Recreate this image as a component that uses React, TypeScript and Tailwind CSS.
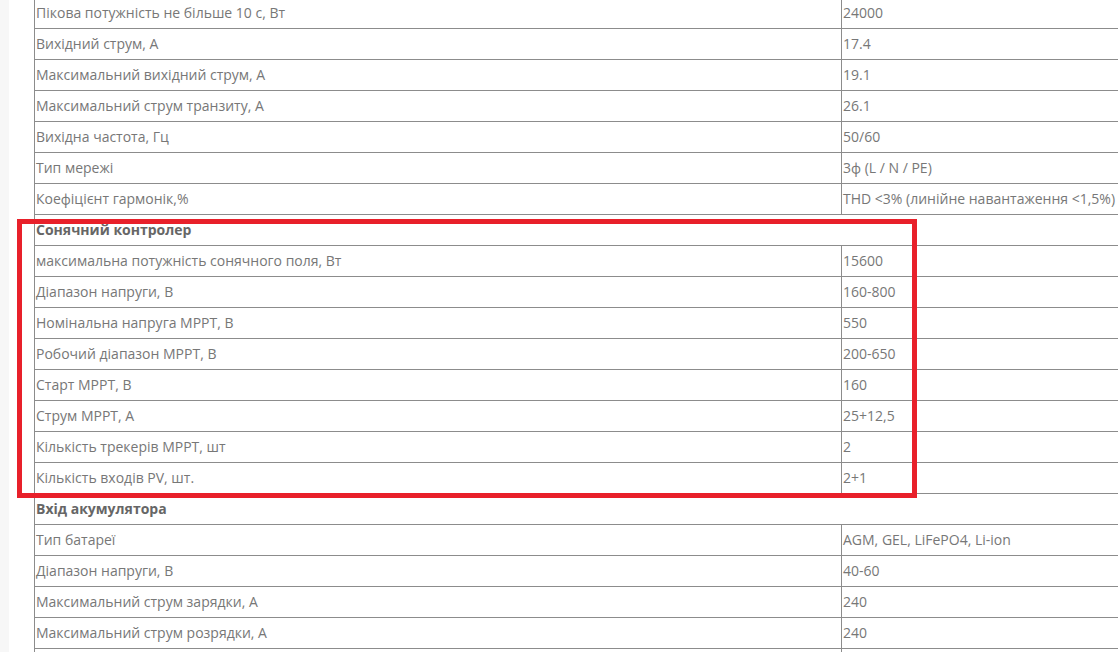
const rows: { label: string; value?: string; head?: boolean }[] = [
  { label: "Пікова потужність не більше 10 с, Вт", value: "24000" },
  { label: "Вихідний струм, А", value: "17.4" },
  { label: "Максимальний вихідний струм, А", value: "19.1" },
  { label: "Максимальний струм транзиту, А", value: "26.1" },
  { label: "Вихідна частота, Гц", value: "50/60" },
  { label: "Тип мережі", value: "3ф (L / N / PE)" },
  { label: "Коефіцієнт гармонік,%", value: "THD <3% (линійне навантаження <1,5%)" },
  { label: "Сонячний контролер", head: true },
  { label: "максимальна потужність сонячного поля, Вт", value: "15600" },
  { label: "Діапазон напруги, В", value: "160-800" },
  { label: "Номінальна напруга МРРТ, В", value: "550" },
  { label: "Робочий діапазон МРРТ, В", value: "200-650" },
  { label: "Старт МРРТ, В", value: "160" },
  { label: "Струм МРРТ, А", value: "25+12,5" },
  { label: "Кількість трекерів МРРТ, шт", value: "2" },
  { label: "Кількість входів PV, шт.", value: "2+1" },
  { label: "Вхід акумулятора", head: true },
  { label: "Тип батареї", value: "AGM, GEL, LiFePO4, Li-ion" },
  { label: "Діапазон напруги, В", value: "40-60" },
  { label: "Максимальний струм зарядки, А", value: "240" },
  { label: "Максимальний струм розрядки, А", value: "240" },
  { label: "", value: "" },
];

export default function App() {
  return (
    <div className="relative h-[652px] w-[1118px] overflow-hidden bg-white font-['Open_Sans',sans-serif] text-[14px] text-[#777]">
      <div className="flex h-full">
        {/* left page gutter */}
        <div className="w-[9px] shrink-0 bg-[#f7f7f7]" />
        <div className="w-[25px] shrink-0" />
        <table className="-mt-[3px] w-[1100px] shrink-0 border-collapse self-start">
          <tbody>
            {rows.map((r, i) =>
              r.head ? (
                <tr key={i} className="h-[31px]">
                  <td
                    colSpan={2}
                    className="border border-[#8c8c8c] py-0 pl-[1px] align-middle font-bold leading-[20px] text-[#666]"
                  >
                    {r.label}
                  </td>
                </tr>
              ) : (
                <tr key={i} className="h-[31px]">
                  <td className="w-[807px] border border-[#8c8c8c] py-0 pl-[1px] pr-2 align-middle leading-[20px]">
                    {r.label}
                  </td>
                  <td className="border border-[#8c8c8c] py-0 pl-[1px] align-middle leading-[20px] whitespace-nowrap">
                    {r.value}
                  </td>
                </tr>
              )
            )}
          </tbody>
        </table>
      </div>

      {/* red highlight frame */}
      <div className="pointer-events-none absolute left-[17px] top-[219px] h-[279px] w-[900px] border-[5px] border-[#e8202a]" />
    </div>
  );
}
